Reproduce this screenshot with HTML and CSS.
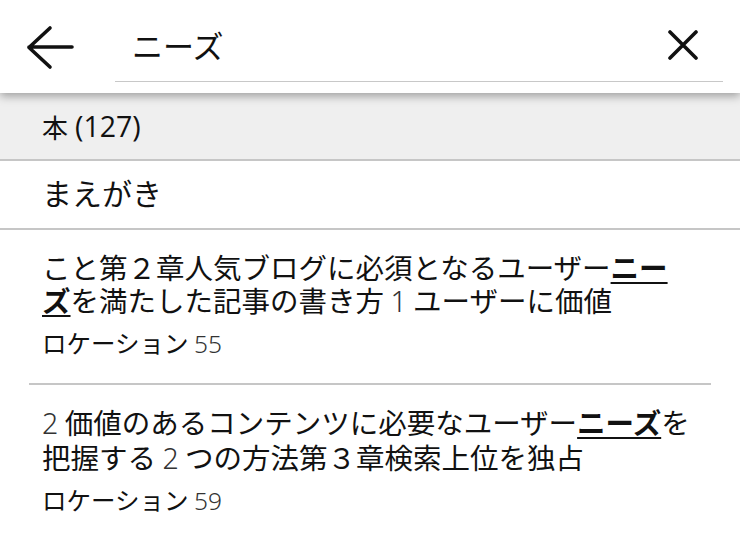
FILE: index.html
```html
<!DOCTYPE html>
<html>
<head>
<title>検索</title>
<link rel="stylesheet" href="styles.css">
</head>
<body>
<div class="search-header">
    <button class="back-button">
        <svg width="52" height="50" viewBox="0 0 52 50">
            <path d="M48 24 H5 M26 5 L5 24.5 L26 44" fill="none" stroke="#111" stroke-width="3.6" stroke-linecap="round" stroke-linejoin="round"/>
        </svg>
    </button>
    <div class="search-field">
        <span class="search-text">ニーズ</span>
        <button class="clear-button">
            <svg width="30" height="30" viewBox="0 0 30 30">
                <path d="M2 2 L28 28 M28 2 L2 28" fill="none" stroke="#111" stroke-width="3.6" stroke-linecap="round"/>
            </svg>
        </button>
    </div>
</div>

<div class="section-title">本 <span class="count">(127)</span></div>
<div class="chapter-row">まえがき</div>

<div class="result-list">
    <div class="result-item">
        <div class="result-text">こと第２章人気ブログに必須となるユーザー<span class="hit">ニーズ</span>を満たした記事の書き方 <span class="num">1</span> ユーザーに価値</div>
        <div class="result-location">ロケーション <span class="num">55</span></div>
    </div>
    <div class="result-item">
        <div class="result-text"><span class="num">2</span> 価値のあるコンテンツに必要なユーザー<span class="hit">ニーズ</span>を把握する <span class="num">2</span> つの方法第３章検索上位を独占</div>
        <div class="result-location">ロケーション <span class="num">59</span></div>
    </div>
</div>
</body>
</html>
```

FILE: styles.css
```css
body {
    margin: 0;
    background: #fff;
    color: #111;
    font-family: "Noto Sans CJK JP", "Noto Sans", sans-serif;
    overflow: hidden;
}

button {
    border: none;
    background: none;
    padding: 0;
    cursor: pointer;
}

.search-header {
    position: relative;
    z-index: 1;
    display: flex;
    height: 93px;
    background: #fff;
    box-shadow: 0 3px 9px rgba(0, 0, 0, 0.35);
}

.back-button {
    width: 115px;
    display: flex;
    align-items: center;
    padding-left: 24px;
    padding-top: 2px;
}

.search-field {
    flex: 1;
    margin-right: 17px;
    margin-top: 8px;
    height: 73px;
    border-bottom: 1px solid #c8c8c8;
    display: flex;
    align-items: center;
    justify-content: space-between;
}

.search-text {
    padding-left: 17px;
    font-size: 31px;
    line-height: 1;
}

.clear-button {
    margin-right: 25px;
    width: 30px;
    height: 30px;
    margin-top: 1px;
}

.section-title {
    height: 66px;
    background: #efefef;
    border-bottom: 2px solid #c6c6c6;
    padding-left: 42px;
    display: flex;
    align-items: center;
    gap: 7px;
    font-size: 26px;
}

.count {
    font-family: "Open Sans", sans-serif;
    font-size: 28.5px;
}

.chapter-row {
    height: 69px;
    box-sizing: border-box;
    border-bottom: 2px solid #c6c6c6;
    padding-left: 42px;
    padding-bottom: 5px;
    display: flex;
    align-items: center;
    font-size: 30px;
}

.result-list {
    padding: 0 29px;
}

.result-item {
    padding: 20px 0 24px 13px;
    border-bottom: 2px solid #c6c6c6;
}

.result-text {
    width: 652px;
    font-size: 28.5px;
    line-height: 33px;
}

.hit {
    font-weight: 700;
    text-decoration: underline;
    text-decoration-thickness: 2px;
    text-underline-offset: 3px;
}

.num {
    font-family: "Noto Sans", sans-serif;
    font-weight: 300;
    color: #333;
}

.result-location {
    margin-top: 10px;
    font-size: 24.5px;
    line-height: 30px;
}
```
